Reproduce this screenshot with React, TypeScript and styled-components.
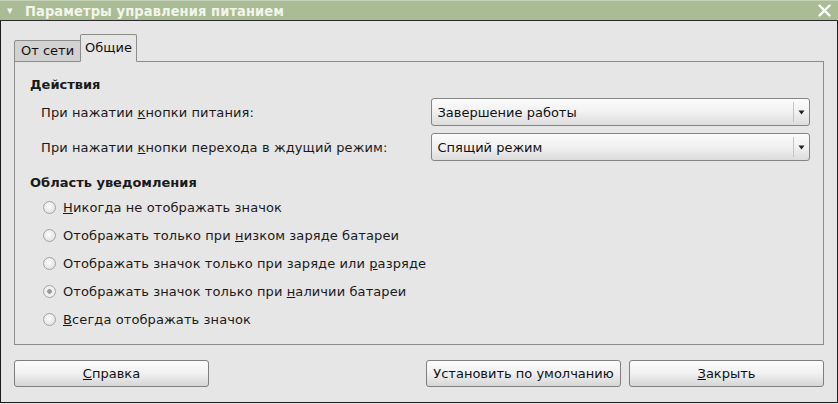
import styled, { createGlobalStyle } from "styled-components";

const GlobalStyle = createGlobalStyle`
  html, body {
    margin: 0;
    padding: 0;
    background: #e6e6e6;
  }
  body {
    font-family: "DejaVu Sans", "Liberation Sans", sans-serif;
    font-size: 13px;
    color: #1a1a1a;
  }
`;

const actions = [
  { label: ["При нажатии ", "к", "нопки питания:"], value: "Завершение работы" },
  { label: ["При нажатии ", "к", "нопки перехода в ждущий режим:"], value: "Спящий режим" },
];

const radios = [
  { pre: "", key: "Н", post: "икогда не отображать значок", checked: false },
  { pre: "Отображать только при ", key: "н", post: "изком заряде батареи", checked: false },
  { pre: "Отображать значок только при заряде или ", key: "р", post: "азряде", checked: false },
  { pre: "Отображать значок только при ", key: "н", post: "аличии батареи", checked: true },
  { pre: "", key: "В", post: "сегда отображать значок", checked: false },
];

export default function App() {
  return (
    <>
      <GlobalStyle />
      <Window>
        <TitleBar>
          <MenuArrow>▾</MenuArrow>
          <Title>Параметры управления питанием</Title>
          <CloseIcon width="13" height="13" viewBox="0 0 13 13">
            <path d="M1.5 1.5 L11.5 11.5 M11.5 1.5 L1.5 11.5" stroke="#ffffff" strokeWidth="2.4" strokeLinecap="round" />
          </CloseIcon>
        </TitleBar>
        <Body>
          <Notebook>
            <TabRow>
              <Tab>От сети</Tab>
              <Tab $active>Общие</Tab>
            </TabRow>
            <Panel>
              <SectionTitle>Действия</SectionTitle>
              <ActionGrid>
                {actions.map((a, i) => (
                  <ActionRow key={i}>
                    <Label>
                      {a.label[0]}
                      <u>{a.label[1]}</u>
                      {a.label[2]}
                    </Label>
                    <Combo>
                      <ComboText>{a.value}</ComboText>
                      <ComboArrow>
                        <svg width="7" height="5" viewBox="0 0 7 5">
                          <path d="M0.5 0.5 L6.5 0.5 L3.5 4.5 Z" fill="#222" />
                        </svg>
                      </ComboArrow>
                    </Combo>
                  </ActionRow>
                ))}
              </ActionGrid>
              <SectionTitle $gap>Область уведомления</SectionTitle>
              <RadioList>
                {radios.map((r, i) => (
                  <RadioRow key={i}>
                    <Radio $checked={r.checked} />
                    <span>
                      {r.pre}
                      <u>{r.key}</u>
                      {r.post}
                    </span>
                  </RadioRow>
                ))}
              </RadioList>
            </Panel>
          </Notebook>
          <ButtonRow>
            <Button>
              <u>С</u>правка
            </Button>
            <Spacer />
            <Button>Установить по умолчанию</Button>
            <Button>
              <u>З</u>акрыть
            </Button>
          </ButtonRow>
        </Body>
      </Window>
    </>
  );
}

const Window = styled.div`
  width: 838px;
  height: 403px;
  box-sizing: border-box;
  border: 1px solid #1c1c1c;
  border-top: none;
  display: flex;
  flex-direction: column;
  background: #e6e6e6;
`;

const TitleBar = styled.div`
  height: 19px;
  background: #a9bc95;
  border-top: 1px solid #c4d1b6;
  border-bottom: 1px solid #2a2a2a;
  display: flex;
  align-items: center;
  padding: 0 6px 0 7px;
  margin: 0 -1px;
`;

const MenuArrow = styled.span`
  color: #f4f6ee;
  font-size: 11px;
  width: 14px;
  margin-right: 4px;
`;

const Title = styled.div`
  flex: 1;
  color: #f2f5ea;
  font-family: "DejaVu Sans Condensed", "DejaVu Sans", sans-serif;
  font-stretch: condensed;
  font-weight: bold;
  font-size: 14.5px;
  letter-spacing: 0.1px;
`;

const CloseIcon = styled.svg`
  display: block;
  margin-right: 1px;
`;

const Body = styled.div`
  flex: 1;
  display: flex;
  flex-direction: column;
  padding: 14px 13px 0 13px;
`;

const Notebook = styled.div`
  display: flex;
  flex-direction: column;
`;

const TabRow = styled.div`
  display: flex;
  align-items: flex-end;
  height: 27px;
  margin-bottom: -1px;
  position: relative;
  z-index: 1;
`;

const Tab = styled.div<{ $active?: boolean }>`
  box-sizing: border-box;
  height: ${p => (p.$active ? "28px" : "22px")};
  padding: ${p => (p.$active ? "5px 4px 0 4px" : "2px 6px 0 6px")};
  background: ${p => (p.$active ? "#e6e6e6" : "#d2d2d2")};
  border: 1px solid #8c8c8c;
  border-bottom: ${p => (p.$active ? "1px solid #e6e6e6" : "1px solid #8c8c8c")};
  border-radius: 2px 2px 0 0;
  margin-left: ${p => (p.$active ? "-1px" : "0")};
  color: #111;
  line-height: 16px;
`;

const Panel = styled.div`
  height: 284px;
  box-sizing: border-box;
  border: 1px solid #8c8c8c;
  padding: 15px 13px 0 15px;
`;

const SectionTitle = styled.div<{ $gap?: boolean }>`
  font-weight: bold;
  line-height: 16px;
  margin-top: ${p => (p.$gap ? "14px" : "0")};
`;

const ActionGrid = styled.div`
  display: flex;
  flex-direction: column;
  gap: 7px;
  margin-top: 5px;
`;

const ActionRow = styled.div`
  display: flex;
  align-items: center;
  padding-left: 11px;
`;

const Label = styled.div`
  width: 391px;
  letter-spacing: 0.1px;
`;

const Combo = styled.div`
  width: 379px;
  height: 28px;
  box-sizing: border-box;
  border: 1px solid #858585;
  border-radius: 3px;
  background: linear-gradient(#fbfbfb, #f1f1f1 50%, #dcdcdc);
  display: flex;
  align-items: center;
`;

const ComboText = styled.div`
  flex: 1;
  padding-left: 5px;
  color: #111;
`;

const ComboArrow = styled.div`
  width: 15px;
  height: 20px;
  border-left: 1px solid #c4c4c4;
  display: flex;
  align-items: center;
  justify-content: center;
`;

const RadioList = styled.div`
  display: flex;
  flex-direction: column;
  gap: 12px;
  margin-top: 8px;
  padding-left: 13px;
`;

const RadioRow = styled.div`
  display: flex;
  align-items: center;
  height: 16px;
  gap: 7px;
  letter-spacing: 0.1px;
`;

const Radio = styled.span<{ $checked?: boolean }>`
  width: 13px;
  height: 13px;
  box-sizing: border-box;
  border-radius: 50%;
  border: 1px solid #a4a4a4;
  background: ${p =>
    p.$checked
      ? "radial-gradient(circle, #9a9a9a 0 2px, #f0f0f0 2.6px 100%)"
      : "radial-gradient(circle at 45% 40%, #fdfdfd, #d8d8d8)"};
  flex-shrink: 0;
`;

const ButtonRow = styled.div`
  display: flex;
  gap: 8px;
  margin-top: 15px;
`;

const Spacer = styled.div`
  flex: 1;
`;

const Button = styled.div`
  width: 195px;
  height: 27px;
  box-sizing: border-box;
  border: 1px solid #7e7e7e;
  border-radius: 3px;
  background: linear-gradient(#fcfcfc, #f0f0f0 50%, #d6d6d6);
  display: flex;
  align-items: center;
  justify-content: center;
  color: #111;
`;
